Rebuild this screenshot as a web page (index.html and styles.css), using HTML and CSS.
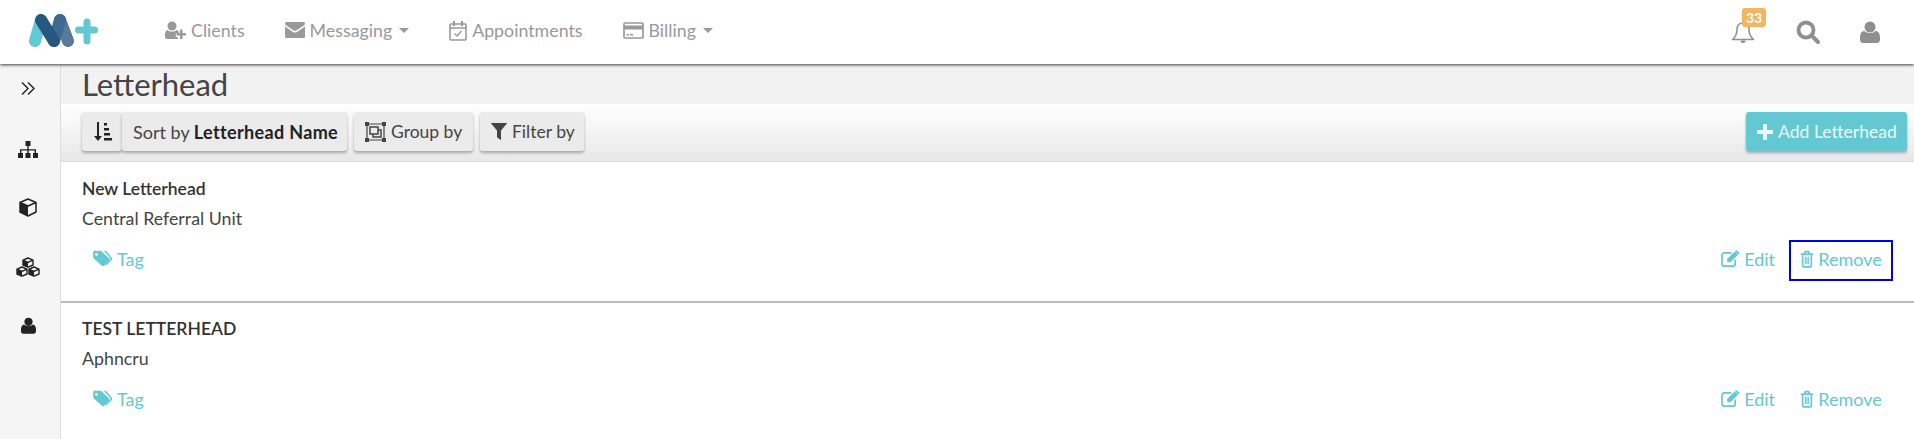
FILE: index.html
```html
<!DOCTYPE html>
<html lang="en">
<head>
    <meta charset="UTF-8">
    <title>Letterhead</title>
    <link rel="stylesheet" href="styles.css">
</head>
<body>
    <svg class="defs" width="0" height="0">
        <symbol id="i-tags" viewBox="0 0 24 20"><path d="M1 2.500C1 1.700 1.700 1 2.500 1H9.600c.7 0 1.300.3 1.800.8l8.300 8.300c.7.700.7 1.800 0 2.500l-5.900 5.900c-.7.700-1.800.7-2.500 0L1.800 9.900C1.300 9.400 1 8.800 1 8.100zM5 3.500a1.700 1.700 0 1 0 0 3.400 1.700 1.700 0 0 0 0-3.400z" fill-rule="evenodd"/><path d="M13.500 1h1.700c.7 0 1.300.3 1.800.8l6 7.300c.7.700.7 1.800 0 2.500l-5.900 5.900c-.7.700-1.600.7-2.300.2l6-6.100c.7-.7.700-1.800 0-2.500z"/></symbol>
        <symbol id="i-edit" viewBox="0 0 20 18"><path d="M15 10v4.500a2.500 2.500 0 0 1-2.500 2.500h-9A2.500 2.500 0 0 1 1 14.500v-9A2.500 2.500 0 0 1 3.500 3H11" fill="none" stroke="currentColor" stroke-width="1.800"/><path d="M6.500 9.500 14.500 1.500l3.500 3.500-8 8H6.500zM15.500.6c.4-.4 1-.4 1.400 0l2.100 2.100c.4.400.4 1 0 1.400l-.7.700-3.500-3.500z"/></symbol>
        <symbol id="i-trash" viewBox="0 0 16 20"><path d="M1 4.500h14M3 4.500v12.300C3 18 3.800 19 4.500 19h7c.7 0 1.500-1 1.500-2.200V4.500M5 4.500l1-3h4l1 3" fill="none" stroke="currentColor" stroke-width="1.900"/><path d="M5.400 7.500h1.300v8.500H5.400zM7.350 7.500h1.300v8.500H7.350zM9.300 7.500h1.300v8.500H9.300z"/></symbol>
        <symbol id="i-user" viewBox="0 0 20 22"><circle cx="10" cy="6" r="5.500"/><path d="M4.200 9.700C5.600 11.200 7.700 12 10 12s4.400-.8 5.800-2.300C18.300 10.200 20 12.500 20 16.500v2.300C20 20.600 18.700 22 17 22H3c-1.700 0-3-1.400-3-3.200v-2.300c0-4 1.700-6.300 4.200-6.800z"/></symbol>
    </svg>

    <header class="topbar">
        <svg class="logo" viewBox="0 0 70 33" width="70" height="33">
            <path d="M7 27 13 6" stroke="#62c8d3" stroke-width="12" stroke-linecap="round"/>
            <path d="M32 6 40 27" stroke="#567a98" stroke-width="12" stroke-linecap="round"/>
            <path d="M26 27 32 6" stroke="#3f6a8f" stroke-width="12" stroke-linecap="round"/>
            <path d="M13 6 26 27" stroke="#27577f" stroke-width="12" stroke-linecap="round"/>
            <path d="M50.500 16h16M59 8v19" stroke="#62c8d3" stroke-width="7" stroke-linecap="round"/>
        </svg>
        <nav class="mainnav">
            <a class="navlink">
                <svg class="ico" width="21" height="18" viewBox="0 0 21 18"><circle cx="7" cy="5" r="4.500"/><path d="M2.500 9c1 1 2.800 1.700 4.500 1.700S10.500 10 11.500 9c1 .2 1.800.7 2.300 1.500V12h-3v4h2v2H2c-1.200 0-2-.8-2-2v-2.500C0 11 1 9.500 2.500 9z"/><path d="M15 8.500h2.500V12H21v2.500h-3.500V18H15v-3.500h-3.500V12H15z"/></svg>
                Clients
            </a>
            <a class="navlink">
                <svg class="ico" width="20" height="16" viewBox="0 0 20 16"><path d="M0 1.500C0 .7.700 0 1.500 0h17c.8 0 1.500.7 1.500 1.500 0 .8-.6 1.500-1.200 1.900l-7.500 5.200c-.8.500-1.800.5-2.600 0L1.200 3.400C.6 3 0 2.300 0 1.500z"/><path d="M0 4.400l8 5.500c1.200.8 2.800.8 4 0l8-5.500v10c0 .9-.7 1.600-1.500 1.600h-17C.7 16 0 15.300 0 14.400z"/></svg>
                Messaging <span class="caret"></span>
            </a>
            <a class="navlink">
                <svg class="ico" width="18" height="21" viewBox="0 0 18 21"><path d="M2 4h14c.6 0 1 .4 1 1v14c0 .6-.4 1-1 1H2c-.6 0-1-.4-1-1V5c0-.6.4-1 1-1zM1 8h16" fill="none" stroke="currentColor" stroke-width="1.600"/><path d="M4 1h2v5H4zM12 1h2v5h-2z"/><path d="M5.500 13.500 8 16l4.500-5" fill="none" stroke="currentColor" stroke-width="1.300"/></svg>
                Appointments
            </a>
            <a class="navlink">
                <svg class="ico" width="21" height="17" viewBox="0 0 21 17"><path d="M2 1h17c.6 0 1 .4 1 1v13c0 .6-.4 1-1 1H2c-.6 0-1-.4-1-1V2c0-.6.4-1 1-1z" fill="none" stroke="currentColor" stroke-width="1.700"/><path d="M1 3.500h19v4H1zM3.500 12h2.500v1.500H3.500zM7 12h3v1.500H7z"/></svg>
                Billing <span class="caret"></span>
            </a>
        </nav>
        <div class="topicons">
            <span class="bell">
                <svg class="ico" width="24" height="25" viewBox="0 0 24 25"><path d="M12 3c3.800 0 6 2.800 6 6.500 0 5 1.500 7.500 4.500 10h-21c3-2.500 4.500-5 4.500-10C6 5.800 8.200 3 12 3z" fill="none" stroke="currentColor" stroke-width="1.500" stroke-linejoin="round"/><path d="M9.500 20.500h5a2.500 2.500 0 0 1-5 0z"/></svg>
                <span class="badge">33</span>
            </span>
            <svg class="ico" width="24" height="24" viewBox="0 0 24 24"><circle cx="10" cy="10" r="7.500" fill="none" stroke="currentColor" stroke-width="3.800"/><path d="M15.500 15.500 22 22" stroke="currentColor" stroke-width="4" stroke-linecap="round"/></svg>
            <svg class="ico" width="20" height="22"><use href="#i-user"/></svg>
        </div>
    </header>

    <div class="layout">
        <aside class="sidebar">
            <svg class="ico side-first" width="14" height="15" viewBox="0 0 14 15"><path d="M1 1.500 7 7.500l-6 6M7 1.500l6 6-6 6" fill="none" stroke="currentColor" stroke-width="1.400"/></svg>
            <svg class="ico" width="20" height="17" viewBox="0 0 20 17"><path d="M7.500 0h5v5h-5zM0 12h5v5H0zM7.500 12h5v5h-5zM15 12h5v5h-5z"/><path d="M9.300 5h1.400v3.200H18V12h-1.400V9.600h-5.900V12H9.300V9.600H3.400V12H2V8.200h7.300z"/></svg>
            <svg class="ico" width="18" height="19" viewBox="0 0 18 19"><path d="M9 1 17 4.500v9.500L9 18 1 14V4.500zM1 4.500 9 8l8-3.500" fill="none" stroke="currentColor" stroke-width="1.500" stroke-linejoin="round"/><path d="M1 4.500 9 8v10L1 14z"/></svg>
            <svg class="ico" width="24" height="20" viewBox="0 0 24 20"><path d="M12 1l5 2.200V8l-5 2.200L7 8V3.200zM7 3.200l5 2.200 5-2.200M6 10l5 2.200V17l-5 2.200L1 17v-4.800zM1 12.200l5 2.200 5-2.200M18 10l5 2.200V17l-5 2.200L13 17v-4.800zM13 12.200l5 2.200 5-2.200" fill="none" stroke="currentColor" stroke-width="1.400" stroke-linejoin="round"/><path d="M7 3.200l5 2.200v4.800L7 8zM1 12.200l5 2.200v4.800L1 17zM13 12.200l5 2.200v4.800L13 17z"/></svg>
            <svg class="ico" width="15" height="17"><use href="#i-user"/></svg>
        </aside>

        <main class="content">
            <h1 class="pagetitle">Letterhead</h1>
            <div class="toolbar">
                <div class="sortgroup">
                    <button class="btn btn-icon">
                        <svg class="ico" width="19" height="19" viewBox="0 0 19 19"><path d="M4 0h2v14h3l-4 5-4-5h3zM11 1h3v2.500h-3zM11 6h5v2.500h-5zM11 11h6v2.500h-6zM11 16h8v2.500h-8z"/></svg>
                    </button>
                    <button class="btn btn-sort">Sort by <b>Letterhead Name</b></button>
                </div>
                <button class="btn btn-group">
                    <svg class="ico" width="21" height="20" viewBox="0 0 21 20"><path d="M2 2h17v16H2z" fill="none" stroke="currentColor" stroke-width="1.200"/><path d="M5 5h8v7H5zM8 12v3h8V8h-3" fill="none" stroke="currentColor" stroke-width="1.500"/><path d="M0 0h4v4H0zM17 0h4v4h-4zM0 16h4v4H0zM17 16h4v4h-4z"/></svg>
                    Group by
                </button>
                <button class="btn btn-filter">
                    <svg class="ico" width="16" height="17" viewBox="0 0 16 17"><path d="M.3 0h15.400c.3 0 .4.300.2.600L10 7.500V16.500c0 .400-.3.500-.6.300L6.300 14.500c-.2-.100-.3-.3-.3-.5V7.500L.1.600C-.1.300 0 0 .3 0z"/></svg>
                    Filter by
                </button>
                <button class="btn btn-add">
                    <svg class="ico" width="16" height="16" viewBox="0 0 16 16"><path d="M6 1c0-.6.400-1 1-1h2c.6 0 1 .4 1 1v5h5c.6 0 1 .4 1 1v2c0 .6-.4 1-1 1h-5v5c0 .6-.4 1-1 1H7c-.6 0-1-.4-1-1v-5H1c-.6 0-1-.4-1-1V7c0-.6.400-1 1-1h5z"/></svg>
                    Add Letterhead
                </button>
            </div>

            <section class="row">
                <div class="row-title">New Letterhead</div>
                <div class="row-sub">Central Referral Unit</div>
                <div class="row-actions">
                    <a class="action tag"><svg class="ico" width="21" height="17"><use href="#i-tags"/></svg>Tag</a>
                    <a class="action edit"><svg class="ico" width="19" height="17"><use href="#i-edit"/></svg>Edit</a>
                    <a class="action remove focused"><svg class="ico" width="14" height="18"><use href="#i-trash"/></svg>Remove</a>
                </div>
            </section>
            <section class="row">
                <div class="row-title">TEST LETTERHEAD</div>
                <div class="row-sub">Aphncru</div>
                <div class="row-actions">
                    <a class="action tag"><svg class="ico" width="21" height="17"><use href="#i-tags"/></svg>Tag</a>
                    <a class="action edit"><svg class="ico" width="19" height="17"><use href="#i-edit"/></svg>Edit</a>
                    <a class="action remove"><svg class="ico" width="14" height="18"><use href="#i-trash"/></svg>Remove</a>
                </div>
            </section>
        </main>
    </div>
</body>
</html>
```

FILE: styles.css
```css
* {
    margin: 0;
    padding: 0;
    box-sizing: border-box;
}

html, body {
    height: 439px;
    overflow: hidden;
}

body {
    font-family: "Lato", "Noto Sans", Arial, sans-serif;
    font-size: 18px;
    color: #333;
    background: #fff;
}

.defs {
    position: absolute;
}

.ico {
    fill: currentColor;
    flex: none;
}

.topbar {
    height: 64px;
    display: flex;
    align-items: center;
    padding: 0 34px 0 28px;
    background: #fff;
    box-shadow: 0 1px 3px rgba(0,0,0,0.75);
    position: relative;
    z-index: 2;
}

.logo {
    flex: none;
    margin-top: -3px;
}

.mainnav {
    display: flex;
    align-items: center;
    gap: 40px;
    margin-left: 67px;
    padding-bottom: 4px;
}

.navlink {
    display: flex;
    align-items: center;
    gap: 5px;
    font-size: 17.8px;
    color: #999;
}

.caret {
    display: inline-block;
    margin-left: 2px;
    border-top: 5px solid #999;
    border-left: 5.5px solid transparent;
    border-right: 5.5px solid transparent;
}

.topicons {
    display: flex;
    align-items: center;
    gap: 40px;
    margin-left: auto;
    color: #8f8f8f;
}

.bell {
    position: relative;
    display: flex;
    margin-right: 1px;
}

.badge {
    position: absolute;
    top: -12px;
    left: 11px;
    width: 24px;
    height: 19px;
    border-radius: 3px;
    background: #f3b562;
    color: #fff;
    font-size: 14px;
    font-weight: 700;
    line-height: 19px;
    text-align: center;
}

.layout {
    display: flex;
    height: 375px;
}

.sidebar {
    width: 61px;
    flex: none;
    display: flex;
    flex-direction: column;
    align-items: center;
    gap: 40px;
    padding: 17px 4px 0 0;
    background: #f5f5f5;
    border-right: 1px solid #ddd;
    color: #222;
}

.side-first {
    margin-bottom: 5px;
}

.content {
    flex: 1;
    min-width: 0;
}

.pagetitle {
    height: 40px;
    padding-left: 21px;
    background: #f2f2f2;
    font-size: 31px;
    font-weight: 400;
    line-height: 40px;
    color: #444;
}

.toolbar {
    height: 58px;
    display: flex;
    align-items: center;
    gap: 7px;
    padding: 0 7px 2px 21px;
    background: linear-gradient(#fff, #e8e8e8);
    border-bottom: 1px solid #ddd;
}

.sortgroup {
    display: flex;
}

.btn {
    height: 39px;
    display: flex;
    align-items: center;
    gap: 5px;
    padding: 0 11px;
    border: 0;
    border-radius: 3px;
    background: #ebebeb;
    box-shadow: 0 2px 3px rgba(0,0,0,0.3);
    font: inherit;
    color: #444;
    white-space: nowrap;
}

.btn-icon {
    width: 40px;
    justify-content: center;
    padding: 0;
    color: #222;
}

.btn-sort {
    display: block;
    width: 225px;
    text-align: left;
}

.btn-sort b {
    color: #222;
    letter-spacing: 0.35px;
}

.btn-group {
    width: 119px;
    font-size: 17.5px;
}

.btn-filter {
    width: 104px;
    font-size: 17.5px;
}

.btn-add {
    margin-left: auto;
    width: 161px;
    padding: 0 0 0 11px;
    background: #64c8d2;
    color: #e8fafb;
    font-size: 17.6px;
}

.row {
    height: 141px;
    padding: 15px 21px 0;
    background: #fff;
    border-bottom: 2px solid #bbb;
}

.row:last-child {
    padding-top: 14px;
    border-bottom: 0;
}

.row-title {
    height: 30px;
    line-height: 24px;
    font-weight: 600;
    font-size: 17.5px;
    color: #333;
}

.row-sub {
    height: 30px;
    line-height: 22px;
    color: #444;
    font-size: 17.8px;
}

.row-actions {
    display: flex;
    align-items: center;
    margin-top: 3px;
}

.action {
    display: flex;
    align-items: center;
    gap: 4px;
    color: #64c8d2;
    font-size: 18px;
}

.tag {
    margin-left: 10px;
    margin-right: auto;
    padding-bottom: 4px;
}

.edit {
    margin-right: 14px;
    padding-bottom: 4px;
}

.remove {
    width: 104px;
    height: 41px;
    justify-content: center;
    padding-bottom: 4px;
    border: 2px solid transparent;
}

.focused {
    border-color: #0000f0;
}
```
